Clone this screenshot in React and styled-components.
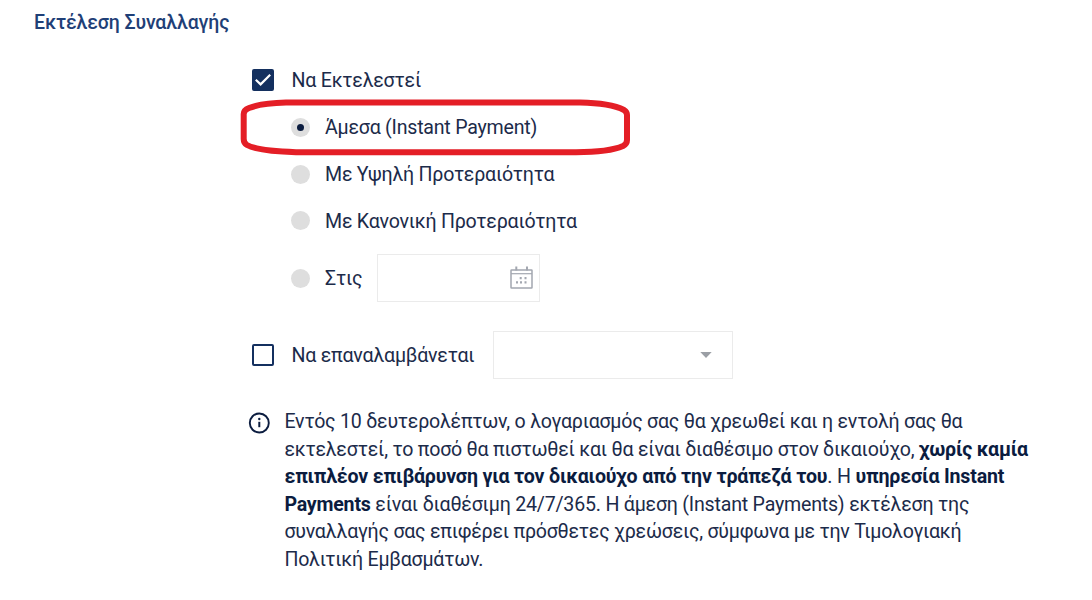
import React from 'react';
import styled, { createGlobalStyle } from 'styled-components';

const color = {
  title: '#1f3f77',
  navy: '#14305f',
  text: '#1c2b4a',
  strong: '#0b1c3f',
  radio: '#dedede',
  border: '#ebebeb',
  icon: '#a3a7b0',
  red: '#e41e26',
};

const GlobalStyle = createGlobalStyle`
  body {
    margin: 0;
    background: #fff;
    font-family: Roboto, 'Noto Sans', sans-serif;
    color: ${color.text};
  }
`;

const Page = styled.div`
  box-sizing: border-box;
  width: 1092px;
  height: 600px;
  padding: 11px 34px 0;
  overflow: hidden;
`;

const Title = styled.h2`
  margin: 0;
  height: 24px;
  line-height: 24px;
  font-size: 19.5px;
  font-weight: 500;
  letter-spacing: -0.12px;
  color: ${color.title};
`;

const Form = styled.div`
  margin: 32px 0 0 218px;
`;

const CheckRow = styled.label`
  display: flex;
  align-items: center;
  height: ${props => props.$height}px;
`;

const CheckBox = styled.span`
  box-sizing: border-box;
  display: flex;
  align-items: center;
  justify-content: center;
  width: 22px;
  height: 22px;
  margin-right: 17.5px;
  border: 2px solid ${color.navy};
  border-radius: 2px;
  background: ${props => (props.$checked ? color.navy : '#fff')};
`;

const Label = styled.span`
  padding-top: 2px;
  font-size: 19.6px;
  line-height: 24px;
  white-space: nowrap;
  letter-spacing: -0.23px;
`;

const RadioList = styled.div`
  padding: 11px 0 0 39px;
`;

const RadioRow = styled.label`
  position: relative;
  display: flex;
  align-items: center;
  height: ${props => props.$height || 47}px;
`;

const Radio = styled.span`
  display: flex;
  align-items: center;
  justify-content: center;
  width: 19px;
  height: 19px;
  margin-right: 15px;
  border-radius: 50%;
  background: ${color.radio};

  &::after {
    content: '';
    width: 7px;
    height: 7px;
    border-radius: 50%;
    background: ${props => (props.$checked ? color.strong : 'transparent')};
  }
`;

const Highlight = styled.svg`
  position: absolute;
  left: -51px;
  top: -4px;
`;

const Field = styled.span`
  box-sizing: border-box;
  display: flex;
  align-items: center;
  justify-content: flex-end;
  width: ${props => props.$width}px;
  height: 48px;
  margin-left: auto;
  padding-right: ${props => props.$inset}px;
  border: 1px solid ${color.border};
`;

// keeps the field edge fixed whatever the label's width
const FieldGroup = styled.span`
  display: flex;
  align-items: center;
  width: ${props => props.$width}px;
`;

const Info = styled.div`
  display: flex;
  align-items: flex-start;
  margin-top: 9px;
  margin-left: -4px;
`;

const InfoText = styled.p`
  margin: 1px 0 0 14.4px;
  font-size: 19.6px;
  line-height: 27.5px;
  white-space: nowrap;

  strong {
    font-weight: 700;
    color: ${color.strong};
  }
`;

const Line = styled.span`
  display: block;
  letter-spacing: ${props => props.$spacing || -0.23}px;
`;

const InfoBadge = styled.svg`
  margin-top: 4.5px;
`;

const CheckIcon = () => (
  <svg width="18" height="18" viewBox="0 0 18 18" fill="none">
    <path d="M1.8 8.8 L6.6 13.4 L16.2 3.8" stroke="#fff" strokeWidth="2.2" />
  </svg>
);

const CalendarIcon = () => (
  <svg width="23" height="25" viewBox="0 0 23 25" fill="none" stroke={color.icon}>
    <rect x="1" y="4" width="21" height="18" rx="0.5" strokeWidth="1.5" />
    <path d="M1 7.7H22" strokeWidth="1.2" />
    <path d="M6.3 0.5V4.5M17 0.5V4.5" strokeWidth="2" />
    <path d="M9.7 12.1h2M14.5 12.1h2M6 16.3h2M10 16.3h2M14.5 16.3h2" strokeWidth="2.2" />
  </svg>
);

const ArrowIcon = () => (
  <svg width="12" height="6" viewBox="0 0 12 6">
    <path d="M0.3 0H11.7L6 6Z" fill="#9b9fa5" />
  </svg>
);

const InfoIcon = () => (
  <InfoBadge width="22" height="22" viewBox="0 0 22 22" fill="none">
    <circle cx="11.3" cy="11" r="9.5" stroke={color.strong} strokeWidth="1.9" />
    <circle cx="11.3" cy="7" r="1.2" fill={color.strong} />
    <path d="M11.3 9.8V15.2" stroke={color.strong} strokeWidth="2" />
  </InfoBadge>
);

const App = () => {
  return (
    <Page>
      <GlobalStyle />
      <Title>Εκτέλεση Συναλλαγής</Title>
      <Form>
        <CheckRow $height={25}>
          <CheckBox $checked><CheckIcon /></CheckBox>
          <Label>Να Εκτελεστεί</Label>
        </CheckRow>
        <RadioList>
          <RadioRow $height={48}>
            <Radio $checked />
            <Label>Άμεσα (Instant Payment)</Label>
            <Highlight width="392" height="60" viewBox="0 0 392 60" fill="none">
              <path
                d="M46 3.6 H340 C362 4 376 7 384 11 Q387 13 387 16 V41 Q387 45 383 47 C374 51 360 53.2 336 53.2 H56 C34 52.5 16 51 7 46 Q3.7 44 3.7 40 V15 Q3.7 11 9 9 C18 5.5 28 4 46 3.6 Z"
                stroke={color.red}
                strokeWidth="6"
              />
            </Highlight>
          </RadioRow>
          <RadioRow $height={46}>
            <Radio />
            <Label>Με Υψηλή Προτεραιότητα</Label>
          </RadioRow>
          <RadioRow>
            <Radio />
            <Label>Με Κανονική Προτεραιότητα</Label>
          </RadioRow>
          <RadioRow $height={68}>
            <Radio />
            <FieldGroup $width={215}>
              <Label>Στις</Label>
              <Field $width={163} $inset={6}><CalendarIcon /></Field>
            </FieldGroup>
          </RadioRow>
        </RadioList>
        <CheckRow $height={86}>
          <CheckBox />
          <FieldGroup $width={441.5}>
            <Label>Να επαναλαμβάνεται</Label>
            <Field $width={240} $inset={20}><ArrowIcon /></Field>
          </FieldGroup>
        </CheckRow>
        <Info>
          <InfoIcon />
          <InfoText>
            <Line $spacing={-0.24}>Εντός 10 δευτερολέπτων, ο λογαριασμός σας θα χρεωθεί και η εντολή σας θα</Line>
            <Line>εκτελεστεί, το ποσό θα πιστωθεί και θα είναι διαθέσιμο στον δικαιούχο, <strong>χωρίς καμία</strong></Line>
            <Line $spacing={-0.18}><strong>επιπλέον επιβάρυνση για τον δικαιούχο από την τράπεζά του</strong>. Η <strong>υπηρεσία Instant</strong></Line>
            <Line $spacing={-0.21}><strong>Payments</strong> είναι διαθέσιμη 24/7/365. Η άμεση (Instant Payments) εκτέλεση της</Line>
            <Line $spacing={-0.24}>συναλλαγής σας επιφέρει πρόσθετες χρεώσεις, σύμφωνα με την Τιμολογιακή</Line>
            <Line>Πολιτική Εμβασμάτων.</Line>
          </InfoText>
        </Info>
      </Form>
    </Page>
  );
};

export default App;
